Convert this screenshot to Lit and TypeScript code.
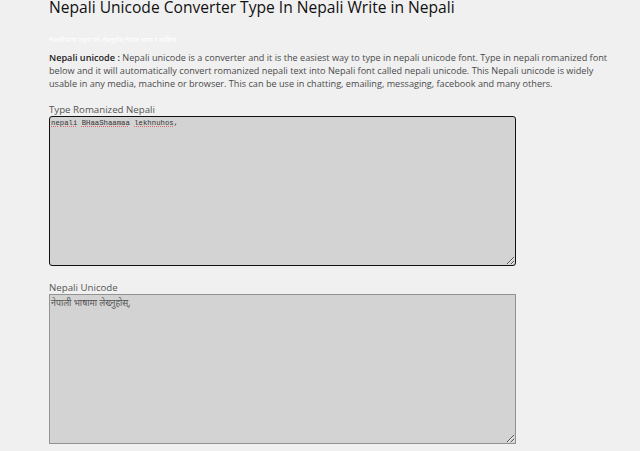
import { LitElement, html, css } from "lit";
import { customElement } from "lit/decorators.js";

@customElement("app-root")
export class AppRoot extends LitElement {
  static styles = css`
    :host {
      display: block;
      width: 640px;
      height: 451px;
      overflow: hidden;
      background: #f0f0f0;
      font-family: "Open Sans", sans-serif;
      color: #4a4a4a;
    }
    .page {
      padding: 0 0 0 49px;
      width: 520px;
    }
    h1 {
      margin: 0;
      font-size: 15.6px;
      line-height: 14px;
      font-weight: 400;
      color: #111;
      white-space: nowrap;
    }
    .sub {
      margin: 20px 0 0;
      font-family: "Noto Sans", "DejaVu Sans", sans-serif;
      font-size: 6.7px;
      line-height: 12px;
      font-weight: 400;
      color: #fff;
      white-space: nowrap;
    }
    .intro {
      margin: 5px 0 0;
      font-size: 9.13px;
      line-height: 13px;
      white-space: nowrap;
    }
    .intro b {
      color: #222;
      font-weight: 600;
    }
    label {
      display: block;
      font-size: 9.7px;
      line-height: 13px;
      color: #555;
    }
    .first {
      margin-top: 13px;
    }
    .second {
      margin-top: 16px;
      line-height: 12px;
    }
    .box {
      box-sizing: border-box;
      width: 467px;
      height: 150px;
      background: #d3d3d3;
      overflow: auto;
      resize: both;
      white-space: pre;
    }
    .roman {
      border: 1.5px solid #111;
      border-radius: 3px;
      padding: 1px 0 0 1px;
      font-family: "Liberation Mono", monospace;
      font-size: 7.3px;
      line-height: 11px;
      color: #333;
    }
    .uni {
      border: 1px solid #929292;
      padding: 1px 0 0 1px;
      font-family: "Noto Sans", "DejaVu Sans", sans-serif;
      font-size: 8.8px;
      line-height: 14px;
      color: #555;
    }
    .bad {
      text-decoration: underline dotted #d66;
      text-decoration-thickness: 1px;
      text-underline-offset: 1px;
    }
  `;

  render() {
    return html`
      <div class="page">
        <h1>Nepali Unicode Converter Type In Nepali Write in Nepali</h1>
        <p class="sub">नेपालीभाषा टाइप गर्न लेख्नुहोस्  नेपाल भाषा र साहित्य</p>
        <p class="intro"><b>Nepali unicode :</b> Nepali unicode is a converter and it is the easiest way to type in nepali unicode font. Type in nepali romanized font<br />below and it will automatically convert romanized nepali text into Nepali font called nepali unicode. This Nepali unicode is widely<br />usable in any media, machine or browser. This can be use in chatting, emailing, messaging, facebook and many others.</p>
        <label class="first">Type Romanized Nepali</label>
        <div class="box roman"><span class="bad">nepali</span> <span class="bad">BHaaShaamaa</span> <span class="bad">lekhnuhos</span>,</div>
        <label class="second">Nepali Unicode</label>
        <div class="box uni">नेपाली भाषामा लेख्नुहोस्,</div>
      </div>
    `;
  }
}
